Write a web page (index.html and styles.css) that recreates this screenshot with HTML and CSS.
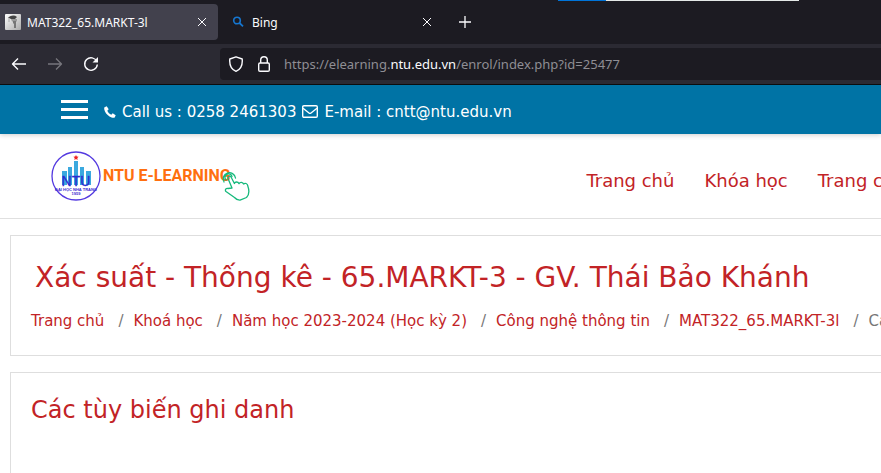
FILE: index.html
```html
<!DOCTYPE html>
<html lang="vi">
<head>
<meta charset="utf-8">
<title>MAT322_65.MARKT-3l</title>
<link rel="stylesheet" href="styles.css">
</head>
<body>
<header class="browser">
  <div class="window-edge"></div>
  <div class="tabs">
    <div class="tab tab-active">
      <svg class="favicon" viewBox="0 0 16 16" aria-hidden="true"><defs><linearGradient id="fav" x2="1" y2="1"><stop stop-color="#fff"/><stop offset="1" stop-color="#aaa"/></linearGradient></defs><rect width="16" height="16" rx="1" fill="url(#fav)"/><path d="M3 3.500Q8 0 12 3L10 5H6z" fill="#444"/><path d="M6 5h6v2.500H7z" fill="#999"/><path d="M8 7h3v7H9V9.500H8z" fill="#777"/><path d="M4 4v4" stroke="#aaa"/></svg>
      <span class="tab-title">MAT322_65.MARKT-3l</span>
      <button class="tab-close" aria-label="Close tab"><svg viewBox="0 0 10 10" width="10" height="10"><path d="m1 1 8 8M9 1 1 9" stroke="#fbfbfe" fill="none"/></svg></button>
    </div>
    <div class="tab">
      <svg class="favicon" viewBox="0 0 16 16" aria-hidden="true"><circle cx="7" cy="6.500" r="3.300" fill="none" stroke="#1676cf" stroke-width="1.600"/><path d="m9.500 9 3.500 3.300" stroke="#1676cf" stroke-width="1.800"/></svg>
      <span class="tab-title">Bing</span>
      <button class="tab-close" aria-label="Close tab"><svg viewBox="0 0 10 10" width="10" height="10"><path d="m1 1 8 8M9 1 1 9" stroke="#fbfbfe" fill="none"/></svg></button>
    </div>
    <button class="new-tab" aria-label="New tab"><svg viewBox="0 0 12 12" width="12" height="12"><path d="M6 0v12M0 6h12" stroke="#fbfbfe" stroke-width="1.300"/></svg></button>
  </div>
  <div class="toolbar">
    <div class="nav-buttons">
      <button aria-label="Back"><svg viewBox="0 0 16 16" width="16" height="16"><path d="M15 8H2M7 2.500 1.500 8 7 13.500" fill="none" stroke="#fbfbfe" stroke-width="1.400" stroke-linejoin="round"/></svg></button>
      <button aria-label="Forward" disabled><svg viewBox="0 0 16 16" width="16" height="16"><path d="M1 8h13M9 2.500 14.500 8 9 13.500" fill="none" stroke="#77767d" stroke-width="1.300" stroke-linejoin="round"/></svg></button>
      <button aria-label="Reload"><svg viewBox="0 0 16 16" width="16" height="16"><path d="M13.800 5.500A6.300 6.300 0 1 0 14.300 8.500" fill="none" stroke="#fbfbfe" stroke-width="1.400"/><path d="M15 1v5.500H9.500z" fill="#fbfbfe"/></svg></button>
    </div>
    <div class="address">
      <svg viewBox="0 0 16 16" width="16" height="16"><path d="M8 .8 14.200 3C14.700 8.500 12.500 13.500 8 15.300 3.500 13.500 1.300 8.500 1.800 3z" fill="none" stroke="#fbfbfe" stroke-width="1.400" stroke-linejoin="round"/></svg>
      <svg viewBox="0 0 16 16" width="16" height="16"><rect x="2.700" y="7" width="10.600" height="8.300" rx="1.300" fill="none" stroke="#fbfbfe" stroke-width="1.400"/><path d="M4.700 7V4a3.300 3.300 0 0 1 6.600 0v3" fill="none" stroke="#fbfbfe" stroke-width="1.400"/></svg>
      <span class="url">https://elearning.<strong>ntu.edu.vn</strong>/enrol/index.php?id=25477</span>
    </div>
  </div>
</header>

<div class="topbar">
  <button class="menu" aria-label="Menu"><span></span><span></span><span></span></button>
  <p class="contact">
    <svg viewBox="0 0 12 12" width="12" height="12" aria-hidden="true"><path d="M.5 1.300 2.700.3l2 3-1.400 1.400c.8 1.800 2.200 3.200 4 4l1.400-1.400 3 2-1 2.200c-1 .6-3 .4-5.200-1C3 8.800.8 6.300.3 3.500.1 2.500.2 1.800.5 1.300z" fill="#fff"/></svg>
    Call us : 0258 2461303
    <svg viewBox="0 0 16 13" width="16" height="13" aria-hidden="true"><rect x=".7" y=".7" width="14.600" height="11.600" rx="1.200" fill="none" stroke="#fff" stroke-width="1.400"/><path d="M1 3.200 7 8q1 .8 2 0l6-4.800" fill="none" stroke="#fff" stroke-width="1.400"/></svg>
    E-mail : cntt@ntu.edu.vn
  </p>
</div>

<div class="site-nav">
  <a class="brand" href="#" aria-label="NTU E-Learning">
    <svg viewBox="0 0 200 52" width="200" height="52">
      <circle cx="26" cy="26" r="24" fill="#fff" stroke="#5339e0" stroke-width="1.300"/>
      <path d="M12 21h5v14h-5zM18 17h4v18h-4zM24 11h4v24h-4zM30 17h4v18h-4zM36 21h5v14h-5z" fill="#3ba9df"/>
      <path d="m26 5 .8 1.600 1.800.2-1.300 1.300.3 1.800-1.600-.9-1.600.9.300-1.800-1.300-1.300 1.800-.2z" fill="#e22"/>
      <text class="seal-name" x="26" y="36" text-anchor="middle">NTU</text>
      <text class="seal-text" x="26" y="41" text-anchor="middle">ĐẠI HỌC NHA TRANG</text>
      <text class="seal-text" x="26" y="45" text-anchor="middle">1959</text>
      <text class="wordmark" x="53" y="31">NTU E-LEARNING</text>
      <g fill="none" stroke="#16b97c" stroke-width="1.300" stroke-linecap="round" stroke-linejoin="round"><path d="M174 32a6.200 6.200 0 1 1 11.500-4M176 30a3.600 3.600 0 1 1 6-3.500"/><path d="m182 38-4-9.500c-.7-2 2-3.300 3.200-1.300l3.200 6.300c.6-2 3.600-2 4.600.1 1-2 4-1.600 4.600.4 1.400-1.400 4-.6 4.200 2 1.600 4.500 1.600 8.500-1.300 11.500l-6.500 2.700q-3 .2-5.500-2.700l-8.500-6c-1.400-1.600 0-3.500 2-3z"/></g>
    </svg>
  </a>
  <nav class="links">
    <a href="#">Trang chủ</a>
    <a href="#">Khóa học</a>
    <a href="#">Trang cá nhân</a>
  </nav>
</div>

<main>
  <section class="card">
    <h1>Xác suất - Thống kê - 65.MARKT-3 - GV. Thái Bảo Khánh</h1>
    <ol class="crumbs">
      <li><a href="#">Trang chủ</a></li>
      <li><a href="#">Khoá học</a></li>
      <li><a href="#">Năm học 2023-2024 (Học kỳ 2)</a></li>
      <li><a href="#">Công nghệ thông tin</a></li>
      <li><a href="#">MAT322_65.MARKT-3l</a></li>
      <li>Các tùy biến ghi danh</li>
    </ol>
  </section>
  <section class="card card-enrol">
    <h2>Các tùy biến ghi danh</h2>
  </section>
</main>
</body>
</html>
```
FILE: styles.css
```css
* { box-sizing: border-box; }

body {
  margin: 0;
  min-height: 100vh;
  display: flex;
  flex-direction: column;
  overflow: hidden;
  background: #fff;
  color: #c22326;
  font-family: Verdana, "DejaVu Sans", sans-serif;
}

button {
  display: flex;
  align-items: center;
  justify-content: center;
  padding: 0;
  border: 0;
  background: none;
}

a { color: inherit; text-decoration: none; }
svg { flex: none; }

.browser {
  position: relative;
  background: #1c1b22;
  border-bottom: 1px solid #0c0c0d;
  color: #fbfbfe;
  font-family: "Noto Sans", sans-serif;
}

.window-edge {
  position: absolute;
  top: 0;
  left: 558px;
  width: 241px;
  height: 1px;
  background: linear-gradient(to right, #0074d9 20%, #e4e9e7 20%);
}

.tabs { display: flex; height: 44px; padding: 4px 0; }

.tab {
  display: flex;
  align-items: center;
  gap: 6px;
  width: 225px;
  padding: 0 6px 0 12px;
  border-radius: 4px;
  font-size: 12px;
}

.tab-active {
  width: 218px;
  padding-left: 5px;
  background: #42414d;
  border-radius: 0 4px 4px 0;
}

.favicon { width: 16px; height: 16px; }
.tab-title { flex: 1; white-space: nowrap; }
.tab-close { width: 20px; height: 20px; }
.new-tab { width: 43px; }

.toolbar {
  display: flex;
  align-items: center;
  height: 40px;
  background: #2b2a33;
}

.nav-buttons { display: flex; gap: 20px; width: 220px; padding-left: 11px; }

.address {
  flex: 1;
  display: flex;
  align-items: center;
  gap: 12px;
  height: 32px;
  padding-left: 8px;
  background: #1c1b22;
  border-radius: 4px 0 0 4px;
}

.url { color: #8f8e94; font-size: 13px; white-space: nowrap; }
.url strong { color: #fbfbfe; font-weight: 400; }

.topbar {
  display: flex;
  align-items: center;
  gap: 16px;
  height: 49px;
  padding-left: 61px;
  background: #0073a5;
  box-shadow: 0 1px 5px rgba(0, 0, 0, .2);
  color: #fff;
}

.menu { flex-direction: column; gap: 5px; width: 27px; }
.menu span { width: 100%; height: 3px; background: #fff; }

.contact {
  display: flex;
  align-items: center;
  gap: 6px;
  margin: 0;
  padding-top: 4px;
  font-size: 15px;
  white-space: nowrap;
}

.site-nav {
  display: flex;
  align-items: center;
  height: 85px;
  padding-left: 50px;
  border-bottom: 1px solid #e0e0e0;
}

.brand { display: flex; }
.seal-name { fill: #2c2bd0; stroke: #2c2bd0; stroke-width: .3px; font: 14px "Liberation Sans", sans-serif; }
.seal-text { fill: #3b2bd0; font: bold 4px "Liberation Sans", sans-serif; }
.wordmark { fill: #ff6f0f; font: bold 16px Roboto, sans-serif; }

.links {
  display: flex;
  gap: 30px;
  margin-left: auto;
  margin-right: -64px;
  padding-top: 8px;
  font-size: 18px;
  white-space: nowrap;
}

main {
  flex: 1;
  display: flex;
  flex-direction: column;
  gap: 16px;
  padding: 16px 0 0 10px;
}

.card {
  padding: 20px 20px 22px;
  border: 1px solid #dedede;
  border-right: 0;
  overflow: hidden;
}

.card-enrol { flex: 1; border-bottom: 0; }

h1, h2 { margin: 0; font-weight: 400; white-space: nowrap; }
h1 { padding-left: 4px; font-size: 28px; line-height: 44px; }
h2 { font-size: 24px; line-height: 34px; }

.crumbs {
  display: flex;
  margin: 9px 0 0;
  padding: 0;
  list-style: none;
  color: #777;
  font-size: 15px;
  line-height: 24px;
  white-space: nowrap;
}

.crumbs a { color: #c22326; }
.crumbs li + li::before { content: "/"; padding: 0 10px 0 14px; }
```
